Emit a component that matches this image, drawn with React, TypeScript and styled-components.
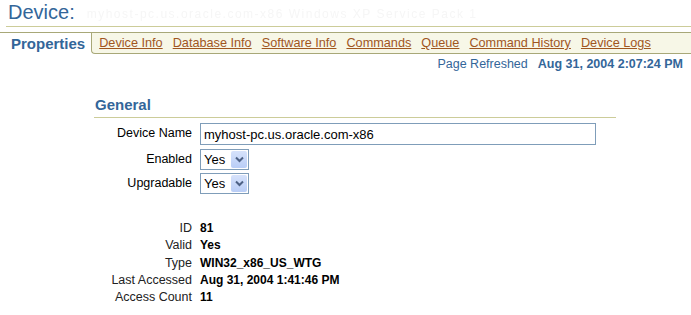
import React from "react";
import styled, { createGlobalStyle } from "styled-components";

const Global = createGlobalStyle`
  html, body { margin: 0; padding: 0; background: #fff; }
  body { font-family: "Liberation Sans", Arial, sans-serif; font-size: 12.5px; color: #000; }
`;

const Page = styled.div`
  width: 691px;
  height: 315px;
  overflow: hidden;
`;

const TitleRow = styled.div`
  display: flex;
  align-items: flex-end;
  height: 26px;
  margin: 0 0 0 6px;
  border-bottom: 1px solid #cccc99;
`;

const Title = styled.h1`
  margin: 0 0 3px 2px;
  font-size: 20px;
  font-weight: normal;
  line-height: 22px;
  color: #336699;
`;

const Ghost = styled.span`
  margin: 0 0 5px 12px;
  font-size: 12px;
  color: #f6f6f6;
  letter-spacing: 1.5px;
  filter: blur(0.7px);
`;

const TabStrip = styled.div`
  display: flex;
  margin-top: 5px;
  border-top: 1px solid #a8a878;
  height: 21px;
`;

const ActiveTab = styled.span`
  display: flex;
  align-items: center;
  padding: 0 6px 0 11px;
  font-size: 15px;
  font-weight: bold;
  color: #336699;
`;

const TabBar = styled.nav`
  flex: 1;
  display: flex;
  align-items: center;
  gap: 10px;
  padding-left: 7px;
  background: #f7f7e7;
  border-left: 1px solid #a8a878;
  border-bottom: 1px solid #a8a878;
  border-bottom-left-radius: 4px;
`;

const TabLink = styled.a`
  color: #a0561f;
  text-decoration: underline;
  font-size: 12.7px;
  cursor: pointer;
`;

const Refreshed = styled.div`
  display: flex;
  justify-content: flex-end;
  gap: 10px;
  padding: 3px 8px 0 0;
  color: #336699;
  font-size: 12.5px;
  line-height: 15px;
`;

const Strong = styled.b`
  font-weight: bold;
`;

const Section = styled.section`
  margin: 23px 0 0 94px;
  width: 522px;
`;

const SectionTitle = styled.h2`
  margin: 0;
  padding: 0 0 2px 1px;
  font-size: 15px;
  font-weight: bold;
  line-height: 20px;
  color: #336699;
  border-bottom: 1px solid #cccc99;
`;

const FormGrid = styled.div`
  display: grid;
  grid-template-columns: 98px 1fr;
  column-gap: 8px;
  row-gap: 3px;
  margin-top: 5px;
`;

const Label = styled.label`
  text-align: right;
  padding-top: 3px;
  line-height: 15px;
`;

const TextBox = styled.input`
  box-sizing: border-box;
  width: 396px;
  height: 22px;
  margin: 0 0 1px 0;
  padding: 0 3px;
  border: 1px solid #7f9db9;
  font-family: "Liberation Sans", Arial, sans-serif;
  font-size: 13px;
  color: #000;
  outline: none;
`;

const Select = styled.div`
  box-sizing: border-box;
  display: inline-flex;
  align-items: center;
  justify-content: space-between;
  width: 49px;
  height: 21px;
  padding: 0 1px 0 3px;
  border: 1px solid #7f9db9;
  font-size: 13px;
  background: #fff;
  justify-self: start;
`;

const DropButton = styled.span`
  display: flex;
  align-items: center;
  justify-content: center;
  width: 16px;
  height: 17px;
  border-radius: 2px;
  background: linear-gradient(#d6e2fb, #b9cdf6);
`;

const InfoGrid = styled.div`
  display: grid;
  grid-template-columns: 98px 1fr;
  column-gap: 8px;
  margin-top: 26px;
  line-height: 17.25px;
`;

const InfoLabel = styled.span`
  text-align: right;
  font-size: 12.5px;
  color: #222;
`;

const InfoValue = styled.span`
  font-weight: bold;
  font-size: 12px;
`;

const Chevron = () => (
  <svg width="9" height="7" viewBox="0 0 9 7">
    <path d="M1 1.5 L4.5 5 L8 1.5" fill="none" stroke="#4d6185" strokeWidth="2" />
  </svg>
);

const tabs = [
  "Device Info",
  "Database Info",
  "Software Info",
  "Commands",
  "Queue",
  "Command History",
  "Device Logs",
];

const info: [string, string][] = [
  ["ID", "81"],
  ["Valid", "Yes"],
  ["Type", "WIN32_x86_US_WTG"],
  ["Last Accessed", "Aug 31, 2004 1:41:46 PM"],
  ["Access Count", "11"],
];

export default function App() {
  return (
    <Page>
      <Global />
      <TitleRow>
        <Title>Device:</Title>
        <Ghost>myhost-pc.us.oracle.com-x86 Windows XP Service Pack 1</Ghost>
      </TitleRow>
      <TabStrip>
        <ActiveTab>Properties</ActiveTab>
        <TabBar>
          {tabs.map((t) => (
            <TabLink key={t}>{t}</TabLink>
          ))}
        </TabBar>
      </TabStrip>
      <Refreshed>
        <span>Page Refreshed</span>
        <Strong>Aug 31, 2004 2:07:24 PM</Strong>
      </Refreshed>
      <Section>
        <SectionTitle>General</SectionTitle>
        <FormGrid>
          <Label>Device Name</Label>
          <TextBox defaultValue="myhost-pc.us.oracle.com-x86" />
          <Label>Enabled</Label>
          <Select>
            Yes
            <DropButton>
              <Chevron />
            </DropButton>
          </Select>
          <Label>Upgradable</Label>
          <Select>
            Yes
            <DropButton>
              <Chevron />
            </DropButton>
          </Select>
        </FormGrid>
        <InfoGrid>
          {info.map(([k, v]) => (
            <React.Fragment key={k}>
              <InfoLabel>{k}</InfoLabel>
              <InfoValue>{v}</InfoValue>
            </React.Fragment>
          ))}
        </InfoGrid>
      </Section>
    </Page>
  );
}
